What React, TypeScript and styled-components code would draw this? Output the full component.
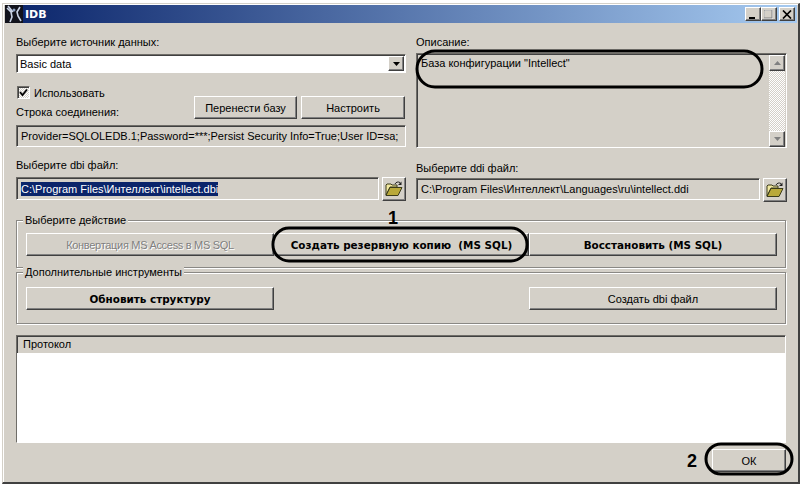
import React from "react";
import styled, { createGlobalStyle, css } from "styled-components";

const GlobalStyle = createGlobalStyle`
  html, body {
    margin: 0;
    background: #fff;
  }
  body {
    font-family: "Liberation Sans", Arial, sans-serif;
    font-size: 11px;
    color: #000;
  }
`;

const raised = css`
  background: #d4d0c8;
  border: 1px solid;
  border-color: #fff #404040 #404040 #fff;
  box-shadow: inset -1px -1px 0 #808080;
`;

const sunken = css`
  border: 1px solid;
  border-color: #6f6d68 #fff #fff #6f6d68;
  box-shadow: inset 1px 1px 0 #404040;
`;

const Page = styled.div`
  position: relative;
  width: 802px;
  height: 488px;
  padding: 3px 2px 4px 2px;
  box-sizing: border-box;
  overflow: hidden;
`;

const Frame = styled.div`
  height: 100%;
  box-sizing: border-box;
  padding: 1px 1px 1px 2px;
  background: #d4d0c8;
  border-top: 1px solid #d4d0c8;
  border-left: 1px solid #d4d0c8;
  border-right: 2px solid #404040;
  border-bottom: 2px solid #404040;
  box-shadow: inset 1px 1px 0 #fff;
  display: flex;
  flex-direction: column;
`;

const TitleBar = styled.div`
  height: 18px;
  flex: none;
  display: flex;
  align-items: center;
  padding-right: 2px;
  background: linear-gradient(90deg, #0a246a 0%, #a6caf0 100%);
`;

const AppIcon = styled.svg`
  width: 18px;
  height: 18px;
  flex: none;
`;

const TitleText = styled.span`
  margin-left: 2px;
  flex: 1;
  color: #fff;
  font-family: "DejaVu Sans", sans-serif;
  font-size: 11px;
  font-weight: bold;
`;

const CaptionButton = styled.div<{ $gap?: number }>`
  ${raised}
  width: 16px;
  height: 14px;
  box-sizing: border-box;
  margin-left: ${({ $gap }) => $gap ?? 0}px;
  display: flex;
  align-items: center;
  justify-content: center;
`;

const Content = styled.div`
  flex: 1;
  display: flex;
  flex-direction: column;
  padding: 12px 11px 0 11px;
`;

const Columns = styled.div`
  display: grid;
  grid-template-columns: 390px 371px;
  column-gap: 10px;
`;

const Column = styled.div`
  display: flex;
  flex-direction: column;
`;

const Label = styled.div<{ $top?: number; $bottom?: number }>`
  height: 14px;
  line-height: 14px;
  margin-top: ${({ $top }) => $top ?? 0}px;
  margin-bottom: ${({ $bottom }) => $bottom ?? 0}px;
  white-space: nowrap;
`;

const Select = styled.div`
  ${sunken}
  height: 19px;
  box-sizing: border-box;
  background: #fff;
  display: flex;
  align-items: center;
  justify-content: space-between;
  padding: 0 1px 0 3px;
`;

const ArrowButton = styled.div`
  ${raised}
  width: 16px;
  height: 15px;
  box-sizing: border-box;
  display: flex;
  align-items: center;
  justify-content: center;
`;

const Arrow = styled.svg<{ $color?: string }>`
  width: 7px;
  height: 4px;
  fill: ${({ $color }) => $color ?? "#000"};
`;

const OptionsRow = styled.div`
  margin-top: 13px;
  height: 33px;
  display: flex;
  justify-content: space-between;
`;

const OptionsLeft = styled.div`
  display: flex;
  flex-direction: column;
  gap: 6px;
`;

const CheckRow = styled.div`
  height: 14px;
  display: flex;
  align-items: center;
  gap: 4px;
  padding-left: 1px;
`;

const CheckBox = styled.div`
  ${sunken}
  width: 13px;
  height: 13px;
  box-sizing: border-box;
  background: repeating-conic-gradient(#d4d0c8 0 25%, #fff 0 50%) 0 0 / 2px 2px;
  display: flex;
  align-items: center;
  justify-content: center;
`;

const OptionsButtons = styled.div`
  margin-top: 10px;
  padding-right: 1px;
  display: flex;
  gap: 4px;
`;

const Button = styled.div<{ $w: number; $h?: number; $bold?: boolean; $disabled?: boolean }>`
  ${raised}
  width: ${({ $w }) => $w}px;
  height: ${({ $h }) => $h ?? 23}px;
  flex: none;
  box-sizing: border-box;
  display: flex;
  align-items: center;
  justify-content: center;
  white-space: nowrap;
  ${({ $bold }) =>
    $bold &&
    css`
      font-family: "DejaVu Sans", sans-serif;
      font-size: 10.4px;
      font-weight: bold;
    `}
  ${({ $disabled }) =>
    $disabled &&
    css`
      color: #808080;
      letter-spacing: -0.3px;
      text-shadow: 1px 1px 0 #fff;
    `}
`;

const Field = styled.div<{ $h: number; $w?: number; $mt?: number }>`
  ${sunken}
  height: ${({ $h }) => $h}px;
  width: ${({ $w }) => ($w ? `${$w}px` : "auto")};
  margin-top: ${({ $mt }) => $mt ?? 0}px;
  box-sizing: border-box;
  display: flex;
  align-items: center;
  padding-left: 4px;
  white-space: nowrap;
  overflow: hidden;
`;

const Selected = styled.span`
  background: #0a246a;
  color: #fff;
  padding: 1px 0;
`;

const FileRow = styled.div`
  display: flex;
  align-items: flex-start;
  justify-content: space-between;
`;

const FolderButton = styled.div`
  ${raised}
  width: 24px;
  height: 24px;
  box-sizing: border-box;
  display: flex;
  align-items: center;
  justify-content: center;
`;

const Description = styled.div`
  ${sunken}
  height: 95px;
  box-sizing: border-box;
  display: flex;
  justify-content: space-between;
`;

const DescriptionText = styled.div`
  padding: 3px 0 0 4px;
`;

const ScrollBar = styled.div`
  width: 16px;
  margin: 1px 1px 0 0;
  display: flex;
  flex-direction: column;
  background: repeating-conic-gradient(#d4d0c8 0 25%, #fff 0 50%) 0 0 / 2px 2px;
`;

const ScrollButton = styled.div<{ $end?: boolean }>`
  ${raised}
  height: 16px;
  box-sizing: border-box;
  margin-top: ${({ $end }) => ($end ? "auto" : "0")};
  display: flex;
  align-items: center;
  justify-content: center;
`;

const Group = styled.div<{ $h: number; $mt: number; $spread?: boolean }>`
  position: relative;
  height: ${({ $h }) => $h}px;
  margin-top: ${({ $mt }) => $mt}px;
  box-sizing: border-box;
  border: 1px solid #8a8884;
  box-shadow: 1px 1px 0 #fff, inset 1px 1px 0 #fff;
  padding: 1px 8px 0 9px;
  display: flex;
  align-items: center;
  justify-content: ${({ $spread }) => ($spread ? "space-between" : "flex-start")};
`;

const Legend = styled.div`
  position: absolute;
  top: -8px;
  left: 6px;
  padding: 0 2px;
  height: 14px;
  line-height: 14px;
  background: #d4d0c8;
`;

const Protocol = styled.div`
  ${sunken}
  height: 108px;
  margin-top: 11px;
  box-sizing: border-box;
  display: flex;
  flex-direction: column;
`;

const ProtocolHeader = styled.div`
  height: 17px;
  line-height: 17px;
  padding-left: 6px;
  flex: none;
`;

const ProtocolBody = styled.div`
  flex: 1;
  background: #fff;
`;

const Footer = styled.div`
  margin-top: 6px;
  display: flex;
  justify-content: flex-end;
`;

const Overlay = styled.svg`
  position: absolute;
  inset: 0;
  width: 802px;
  height: 488px;
  pointer-events: none;
`;

const Marker = styled.div<{ $x: number; $y: number }>`
  position: absolute;
  left: ${({ $x }) => $x}px;
  top: ${({ $y }) => $y}px;
  font-size: 18px;
  line-height: 18px;
  font-weight: bold;
`;

const FolderIcon = () => (
  <svg width="18" height="16" viewBox="0 0 18 16">
    <path d="M1 14V4l1-1h4l1 1h5v2H5L1 14z" fill="#f2e9a0" stroke="#3c3c1a" strokeWidth="1" />
    <path d="M1 14.5l4-8h12l-4 8z" fill="#b9a93a" stroke="#3c3c1a" strokeWidth="1" />
    <path d="M10 3c1-2 3-2.500 5-1.500" fill="none" stroke="#222" strokeWidth="1" />
    <path d="M16.500 0.500v3.500h-3.500z" fill="#222" />
  </svg>
);

const DownArrow = () => (
  <Arrow viewBox="0 0 7 4">
    <path d="M0 0h7L3.500 4z" />
  </Arrow>
);

export default function App() {
  return (
    <>
      <GlobalStyle />
      <Page>
        <Frame>
          <TitleBar>
            <AppIcon viewBox="0 0 18 18">
              <rect width="18" height="18" fill="#12131c" />
              <path d="M2 3l4 4 1 5-2 5M3 1l5 6M15 2l-3 5 1 4 3 5" fill="none" stroke="#c9d3e6" strokeWidth="1.600" />
              <circle cx="9" cy="5" r="1.500" fill="#8fa3c4" />
            </AppIcon>
            <TitleText>IDB</TitleText>
            <CaptionButton>
              <svg width="10" height="9" viewBox="0 0 10 9">
                <rect x="1" y="7" width="6" height="2" fill="#000" />
              </svg>
            </CaptionButton>
            <CaptionButton>
              <svg width="10" height="9" viewBox="0 0 10 9">
                <rect x="0.500" y="0.500" width="8" height="8" fill="none" stroke="#fff" />
                <rect x="0" y="0" width="8" height="8" fill="none" stroke="#808080" />
              </svg>
            </CaptionButton>
            <CaptionButton $gap={2}>
              <svg width="10" height="9" viewBox="0 0 10 9">
                <path d="M1 0.500l8 8M9 0.500l-8 8" stroke="#000" strokeWidth="1.700" />
              </svg>
            </CaptionButton>
          </TitleBar>
          <Content>
            <Columns>
              <Column>
                <Label $bottom={5}>Выберите источник данных:</Label>
                <Select>
                  Basic data
                  <ArrowButton>
                    <DownArrow />
                  </ArrowButton>
                </Select>
                <OptionsRow>
                  <OptionsLeft>
                    <CheckRow>
                      <CheckBox>
                        <svg width="9" height="9" viewBox="0 0 9 9">
                          <path d="M1 4l2.500 3L8 1.500" fill="none" stroke="#000" strokeWidth="1.800" />
                        </svg>
                      </CheckBox>
                      Использовать
                    </CheckRow>
                    <Label>Строка соединения:</Label>
                  </OptionsLeft>
                  <OptionsButtons>
                    <Button $w={103}>Перенести базу</Button>
                    <Button $w={104}>Настроить</Button>
                  </OptionsButtons>
                </OptionsRow>
                <Field $h={22} $mt={6}>
                  Provider=SQLOLEDB.1;Password=***;Persist Security Info=True;User ID=sa;
                </Field>
                <Label $top={11} $bottom={5}>Выберите dbi файл:</Label>
                <FileRow>
                  <Field $h={23} $w={363}>
                    <Selected>C:\Program Files\Интеллект\intellect.dbi</Selected>
                  </Field>
                  <FolderButton>
                    <FolderIcon />
                  </FolderButton>
                </FileRow>
              </Column>
              <Column>
                <Label $bottom={4}>Описание:</Label>
                <Description>
                  <DescriptionText>База конфигурации "Intellect"</DescriptionText>
                  <ScrollBar>
                    <ScrollButton>
                      <Arrow $color="#808080" viewBox="0 0 7 4">
                        <path d="M0 4h7L3.500 0z" />
                      </Arrow>
                    </ScrollButton>
                    <ScrollButton $end>
                      <Arrow $color="#808080" viewBox="0 0 7 4">
                        <path d="M0 0h7L3.500 4z" />
                      </Arrow>
                    </ScrollButton>
                  </ScrollBar>
                </Description>
                <Label $top={13} $bottom={3}>Выберите ddi файл:</Label>
                <FileRow>
                  <Field $h={22} $w={344}>
                    C:\Program Files\Интеллект\Languages\ru\intellect.ddi
                  </Field>
                  <FolderButton>
                    <FolderIcon />
                  </FolderButton>
                </FileRow>
              </Column>
            </Columns>
            <Group $h={48} $mt={18}>
              <Legend>Выберите действие</Legend>
              <Button $w={248} $disabled>Конвертация MS Access в MS SQL</Button>
              <Button $w={255} $bold>Создать резервную копию&nbsp; (MS SQL)</Button>
              <Button $w={248} $bold>Восстановить (MS SQL)</Button>
            </Group>
            <Group $h={52} $mt={4} $spread>
              <Legend>Дополнительные инструменты</Legend>
              <Button $w={248} $bold>Обновить структуру</Button>
              <Button $w={248}>Создать dbi файл</Button>
            </Group>
            <Protocol>
              <ProtocolHeader>Протокол</ProtocolHeader>
              <ProtocolBody />
            </Protocol>
            <Footer>
              <Button $w={74}>ОК</Button>
            </Footer>
          </Content>
        </Frame>
        <Overlay viewBox="0 0 802 488">
          <g fill="none" stroke="#000" strokeWidth="3">
            <rect x="417" y="51" width="345" height="36" rx="18" />
            <rect x="273" y="228" width="254" height="33" rx="16" />
            <rect x="706" y="444" width="86" height="30" rx="15" />
          </g>
        </Overlay>
        <Marker $x={388} $y={209}>1</Marker>
        <Marker $x={687} $y={452}>2</Marker>
      </Page>
    </>
  );
}
